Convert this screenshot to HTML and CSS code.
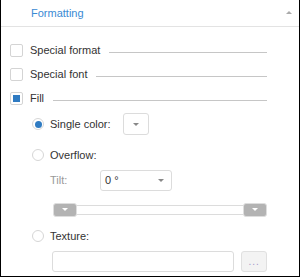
FILE: index.html
```html
<!DOCTYPE html>
<html lang="en">
<head>
    <meta charset="UTF-8">
    <title>Formatting</title>
    <link rel="stylesheet" href="styles.css">
</head>
<body>
    <div class="panel">
        <div class="panel-head">
            <span class="title">Formatting</span>
            <span class="collapse"></span>
        </div>
        <div class="panel-body">
            <div class="check-row">
                <span class="check"></span>
                <span class="label">Special format</span>
                <span class="rule"></span>
            </div>
            <div class="check-row">
                <span class="check"></span>
                <span class="label">Special font</span>
                <span class="rule"></span>
            </div>
            <div class="check-row">
                <span class="check checked"></span>
                <span class="label">Fill</span>
                <span class="rule"></span>
            </div>

            <div class="sub">
                <div class="radio-row single">
                    <span class="radio selected"></span>
                    <span class="label">Single color:</span>
                    <span class="color-btn"><span class="arrow"></span></span>
                </div>
                <div class="radio-row overflow">
                    <span class="radio"></span>
                    <span class="label">Overflow:</span>
                </div>
                <div class="tilt-row">
                    <span class="muted">Tilt:</span>
                    <span class="combo">0 °<span class="arrow"></span></span>
                </div>
                <div class="slider">
                    <span class="slider-btn"><span class="arrow white"></span></span>
                    <span class="track"></span>
                    <span class="slider-btn"><span class="arrow white"></span></span>
                </div>
                <div class="radio-row texture">
                    <span class="radio"></span>
                    <span class="label">Texture:</span>
                </div>
                <div class="file-row">
                    <span class="text-input"></span>
                    <span class="dots-btn">...</span>
                </div>
            </div>
        </div>
    </div>
</body>
</html>
```

FILE: styles.css
```css
body {
    margin: 0;
    background: #fff;
    font-family: "Liberation Sans", Arial, sans-serif;
    font-size: 11px;
    color: #333;
}
.panel {
    width: 298px;
    height: 276px;
    border: 1px solid #000;
    border-top: none;
    background: #fff;
}
.panel-head {
    height: 26px;
    border-bottom: 1px solid #e3e3e3;
    display: flex;
    align-items: center;
    padding-left: 30px;
    padding-right: 7px;
}
.title {
    flex: 1;
    color: #3a8ad4;
    font-size: 11px;
}
.collapse {
    width: 0;
    height: 0;
    border-left: 3px solid transparent;
    border-right: 3px solid transparent;
    border-bottom: 3px solid #aaa;
    margin-top: -2px;
}
.panel-body {
    padding: 11px 32px 0 9px;
}
.check-row {
    height: 24px;
    display: flex;
    align-items: center;
}
.check {
    width: 11px;
    height: 11px;
    border: 1px solid #d4d4d4;
    border-radius: 2px;
    display: flex;
    align-items: center;
    justify-content: center;
}
.check.checked::after {
    content: "";
    width: 7px;
    height: 7px;
    background: #2f7bc2;
}
.check-row .label {
    margin-left: 7px;
}
.rule {
    flex: 1;
    height: 0;
    border-top: 1px solid #c6c6c6;
    margin-left: 9px;
    margin-top: 4px;
}
.sub {
    padding-left: 22px;
}
.radio-row {
    height: 24px;
    display: flex;
    align-items: center;
}
.radio {
    width: 10px;
    height: 10px;
    border: 1px solid #d6d6d6;
    border-radius: 50%;
    display: flex;
    align-items: center;
    justify-content: center;
}
.radio.selected::after {
    content: "";
    width: 7px;
    height: 7px;
    border-radius: 50%;
    background: #2f7bc2;
}
.radio-row .label {
    margin-left: 6px;
}
.single {
    margin-top: 2px;
}
.overflow {
    margin-top: 7px;
}
.texture {
    margin-top: 7px;
}
.color-btn {
    width: 24px;
    height: 20px;
    border: 1px solid #dcdcdc;
    border-radius: 3px;
    margin-left: 12px;
    display: flex;
    align-items: center;
    justify-content: center;
}
.arrow {
    width: 0;
    height: 0;
    border-left: 3px solid transparent;
    border-right: 3px solid transparent;
    border-top: 3px solid #888;
}
.arrow.white {
    border-top-color: #fff;
}
.tilt-row {
    height: 22px;
    margin-top: 2px;
    display: flex;
    align-items: center;
    padding-left: 18px;
}
.muted {
    width: 50px;
    color: #999;
}
.combo {
    width: 64px;
    height: 19px;
    border: 1px solid #dcdcdc;
    border-radius: 3px;
    display: flex;
    align-items: center;
    padding-left: 4px;
    justify-content: space-between;
    padding-right: 7px;
    box-sizing: content-box;
    width: 59px;
}
.slider {
    margin-top: 11px;
    margin-left: 21px;
    height: 15px;
    display: flex;
    align-items: center;
}
.slider-btn {
    width: 22px;
    height: 12px;
    background: #b3b3b3;
    border: 1px solid #dedede;
    border-radius: 3px;
    display: flex;
    align-items: center;
    justify-content: center;
}
.track {
    flex: 1;
    height: 8px;
    border-top: 1px solid #dcdcdc;
    border-bottom: 1px solid #dcdcdc;
}
.file-row {
    margin-top: 3px;
    margin-left: 20px;
    display: flex;
    height: 21px;
}
.text-input {
    width: 181px;
    height: 19px;
    border: 1px solid #dcdcdc;
    border-radius: 3px;
}
.dots-btn {
    width: 24px;
    height: 19px;
    margin-left: 7px;
    border: 1px solid #e0e0e0;
    border-radius: 3px;
    background: #f3f3f3;
    color: #a395c8;
    font-size: 10px;
    text-align: center;
    line-height: 19px;
    letter-spacing: 1px;
}
```
